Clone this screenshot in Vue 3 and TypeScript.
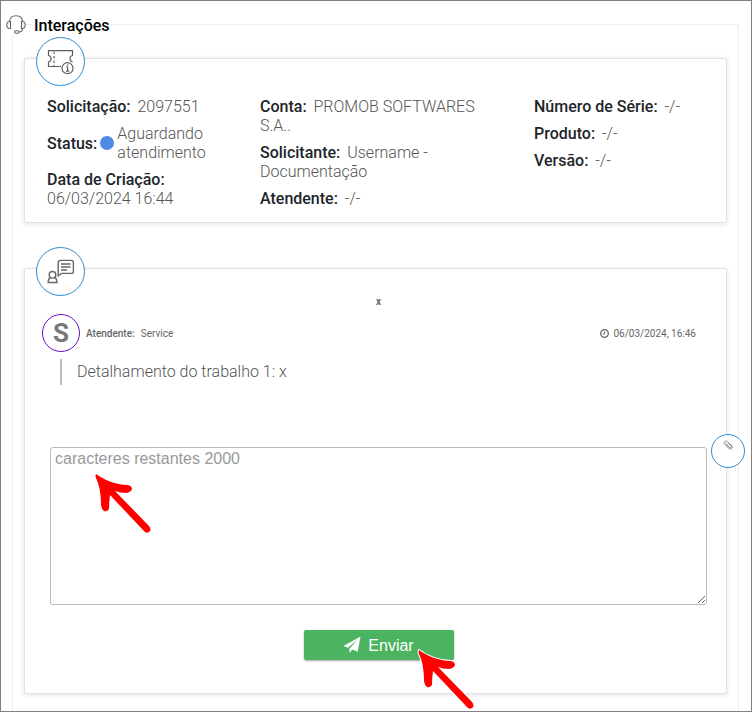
<script setup lang="ts">
import { ref } from 'vue'

interface Field {
  label: string
  value: string
  status?: boolean
}

const columns: Field[][] = [
  [
    { label: 'Solicitação:', value: '2097551' },
    { label: 'Status:', value: 'Aguardando atendimento', status: true },
    { label: 'Data de Criação:', value: '06/03/2024 16:44' },
  ],
  [
    { label: 'Conta:', value: 'PROMOB SOFTWARES S.A..' },
    { label: 'Solicitante:', value: 'Username - Documentação' },
    { label: 'Atendente:', value: '-/-' },
  ],
  [
    { label: 'Número de Série:', value: '-/-' },
    { label: 'Produto:', value: '-/-' },
    { label: 'Versão:', value: '-/-' },
  ],
]

const message = ref('')
const arrowPath =
  'M1 1C8 6 20 12 33 12Q37 13 37 16Q36 19 31 20Q25 20 20 18L54 53Q57 57 54 59Q51 61 48 57L15 22Q14 29 14 36Q12 39 9 38Q7 37 6 32C6 20 4 11 1 5Q0 2 1 1Z'
</script>

<template>
  <main class="page">
    <section class="panel">
      <header class="heading">
        <svg class="headset" viewBox="0 0 20 20" fill="none" stroke="#666" stroke-width="1.1">
          <path d="M3.5 7C3.5 2.800 6 .8 10 .8S16.500 2.800 16.500 7" />
          <path d="M4.500 6.500v7H3.600C1.800 13.500.8 12 .8 10s1-3.500 2.800-3.500zM15.500 6.500v7h.9c1.800 0 2.800-1.500 2.800-3.500s-1-3.500-2.800-3.500z" />
          <path d="M16.500 13.500c0 2.500-1.500 3.500-3.500 3.500" />
          <rect x="8.500" y="15.800" width="4.500" height="2.400" rx="1.200" />
        </svg>
        <h1>Interações</h1>
      </header>

      <article class="card summary">
        <span class="badge">
          <svg width="28" height="26" viewBox="0 0 28 26" fill="none" stroke="#5f5f5f" stroke-width="1.200">
            <path d="M14 17.500H1.500v-4.500c1.800-.3 2.500-1.500 2.500-3.200s-.7-3-2.500-3.300V1.600h24v4.900c-1.800.3-2.500 1.500-2.500 3.300 0 1.500.8 2.700 2.500 3" />
            <path d="M7 2.500v15" stroke-dasharray="2.500 2" />
            <circle cx="20.500" cy="19.200" r="5.500" fill="#fff" />
            <path d="M19.300 18h1.300v4.200M19 22.200h3.200" />
            <path d="M20.500 15.400v1.300" stroke-width="1.400" />
          </svg>
        </span>
        <div class="columns">
          <div v-for="(column, index) in columns" :key="index" class="column">
            <div v-for="field in column" :key="field.label" :class="['field', { status: field.status }]">
              <strong>{{ field.label }}</strong>
              <i v-if="field.status" class="dot"></i>
              {{ ' ' }}<span class="value">{{ field.value }}</span>
            </div>
          </div>
        </div>
      </article>

      <article class="card conversation">
        <span class="badge">
          <svg width="28" height="26" viewBox="0 0 28 26" fill="none" stroke="#666" stroke-width="1.400">
            <circle cx="5.500" cy="15.800" r="3.300" />
            <path d="M3.500 18.500C1.800 19.200 1.200 20.300 1.200 23.500h8.800c0-3.200-.7-4.300-2.500-5" />
            <path d="M11.200 16.800V3.600c0-1.500.8-2.200 2.200-2.200h10.800c1.500 0 2.200.8 2.200 2.200v8.600c0 1.500-.8 2.200-2.200 2.200H14.500z" />
            <path d="M14 5h9.500M14 8h9.500M14 11h6" />
          </svg>
        </span>
        <p class="subject">x</p>
        <div class="author">
          <span class="avatar">S</span>
          <strong>Atendente:</strong>
          <span>Service</span>
          <time datetime="2024-03-06T16:46">
            <svg width="9" height="9" viewBox="0 0 9 9" fill="none" stroke="#666">
              <circle cx="4.500" cy="4.500" r="3.800" stroke-width="1.300" />
              <path d="M4.700 2.200v2.600H2.800" />
            </svg>
            06/03/2024, 16:46
          </time>
        </div>
        <p class="detail">Detalhamento do trabalho 1: x</p>

        <form class="reply" @submit.prevent>
          <div class="editor">
            <textarea v-model="message" aria-label="Mensagem" maxlength="2000" placeholder="caracteres restantes 2000"></textarea>
            <button class="attach" type="button" aria-label="Anexar arquivo">
              <svg width="10" height="10" viewBox="0 0 10 10" fill="none" stroke="#8b8580" stroke-width="1">
                <path d="M3 3.500l3.500 4c1 1 2.700-.2 1.800-1.400L4.500 1.700C3 .2.200 1.900 1.600 3.800l4 4.500c1.700 1.800 4.500-.2 3.200-2.100L5.500 2.500" />
              </svg>
            </button>
            <svg class="arrow at-editor" viewBox="0 0 58 62"><path :d="arrowPath" fill="#f00" /></svg>
          </div>
          <button class="send" type="submit">
            <svg width="18" height="18" viewBox="0 0 18 18" fill="#fff">
              <path d="M17.500.5L14.700 15.800 9.200 13.500 6.500 17v-4.500L15 3.500 4.800 11.800.5 10z" />
            </svg>
            Enviar
            <svg class="arrow at-send" viewBox="0 0 58 62">
              <path :d="arrowPath" fill="#f00" stroke="#fff" stroke-width="2" paint-order="stroke" />
            </svg>
          </button>
        </form>
      </article>
    </section>
  </main>
</template>

<style>
body {
  margin: 0;
  background: #fff;
}
</style>

<style scoped>
* {
  box-sizing: border-box;
}

.page {
  display: flex;
  min-height: 100vh;
  padding: 23px 12px 0 11px;
  border: 1px solid #808080;
  color: #555;
  font: 300 16px/19px Roboto, sans-serif;
}

.panel {
  flex: 1;
  min-width: 0;
  padding: 0 11px 16px;
  border: 1px solid #eee;
  border-bottom: 0;
}

.heading {
  display: flex;
  align-items: center;
  gap: 8px;
  height: 20px;
  margin: -10px 0 23px -18px;
}

.headset {
  width: 20px;
  height: 20px;
  background: #fff;
}

h1 {
  margin: 0;
  background: #fff;
  color: #000;
  font-size: 16px;
  font-weight: 500;
}

.card {
  position: relative;
  border: 1px solid #e2e2e2;
  border-radius: 2px;
  background: #fff;
  box-shadow: 0 1px 5px rgba(0, 0, 0, 0.12);
}

.badge {
  position: absolute;
  top: -22px;
  left: 11px;
  display: flex;
  align-items: center;
  justify-content: center;
  width: 49px;
  height: 49px;
  border: 1px solid #2f8bd0;
  border-radius: 50%;
  background: #fff;
}

.summary {
  padding: 38px 22px 14px;
}

.columns {
  display: grid;
  grid-template-columns: 213fr 274fr 170fr;
}

.column {
  display: flex;
  flex-direction: column;
  gap: 8px;
  padding-right: 40px;
}

.column:last-child {
  padding-right: 0;
}

.field strong {
  margin-right: 3px;
  color: #212529;
  font-weight: 500;
}

.status {
  display: flex;
  align-items: center;
}

.dot {
  flex: none;
  width: 14px;
  height: 14px;
  margin-right: 3px;
  border-radius: 50%;
  background: #4f89e6;
}

.conversation {
  margin-top: 45px;
  padding: 24px 19px 33px 17px;
}

.subject {
  margin: 0 0 4px;
  padding-left: 8px;
  color: #666;
  font-size: 10px;
  font-weight: 700;
  line-height: 17px;
  text-align: center;
}

.author {
  display: flex;
  align-items: center;
  gap: 6px;
  padding-right: 11px;
  color: #666;
  font-size: 10px;
  font-weight: 400;
}

.author strong {
  font-weight: 500;
}

.avatar {
  display: flex;
  align-items: center;
  justify-content: center;
  width: 38px;
  height: 38px;
  border: 1px solid #6a11cb;
  border-radius: 50%;
  color: #777;
  font-size: 26px;
  font-weight: 700;
}

.author time {
  display: flex;
  align-items: center;
  gap: 4px;
  margin-left: auto;
}

.detail {
  margin: 7px 0 0 18px;
  padding: 3px 0 4px 15px;
  border-left: 2px solid #bbb;
}

.reply {
  display: flex;
  flex-direction: column;
  align-items: center;
  gap: 25px;
  margin: 62px 0 0 8px;
}

.editor {
  position: relative;
  width: 100%;
}

textarea {
  display: block;
  width: 100%;
  height: 158px;
  padding: 1px 4px;
  border: 1px solid #bbb;
  border-radius: 3px;
  background: #fff;
  color: #555;
  font: 16px/19px "Liberation Sans", Arial, sans-serif;
  resize: vertical;
}

textarea::placeholder {
  color: #999;
}

.attach {
  position: absolute;
  top: -13px;
  right: -38px;
  display: flex;
  justify-content: center;
  align-items: flex-start;
  width: 34px;
  height: 34px;
  padding: 5px 0 0;
  border: 1px solid #2f8bd0;
  border-radius: 50%;
  background: #fff;
}

.send {
  position: relative;
  display: flex;
  align-items: center;
  justify-content: center;
  gap: 7px;
  width: 150px;
  height: 30px;
  padding: 0;
  border: 0;
  border-radius: 2px;
  background: #4cb461;
  box-shadow: 0 1px 2px rgba(0, 0, 0, 0.35);
  color: #fff;
  font: 16px/19px "Liberation Sans", Arial, sans-serif;
}

.arrow {
  position: absolute;
  width: 58px;
  height: 62px;
  overflow: visible;
  pointer-events: none;
}

.at-editor {
  top: 26px;
  left: 45px;
}

.at-send {
  top: 19px;
  left: 114px;
}
</style>
